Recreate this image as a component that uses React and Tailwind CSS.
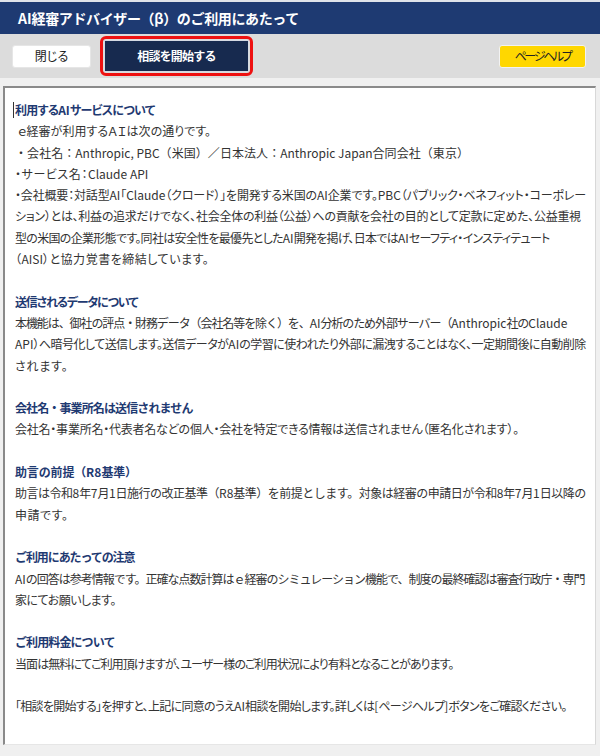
import React, { useLayoutEffect, useRef, useState, useEffect } from "react";

// Fits a single line of text to the width it has in the reference by
// computing letter-spacing (for the CJK characters only) while the page runs.
// Lines that would need heavy squeezing switch to proportional kana (palt).
function Fit({ w, children, className = "" }) {
  const ref = useRef(null);
  const [ls, setLs] = useState(0);
  const [palt, setPalt] = useState(false);
  const text = String(children);
  const parts = text.split(/([\x20-\x7E]+)/).filter((p) => p.length);
  const cjkCount = parts
    .filter((p) => !/^[\x20-\x7E]+$/.test(p))
    .reduce((a, p) => a + [...p].length, 0);
  const measure = () => {
    const el = ref.current;
    if (!el) return;
    const cur = parseFloat(getComputedStyle(el).letterSpacing) || 0;
    const nat = el.getBoundingClientRect().width - cur * cjkCount;
    const v = cjkCount > 1 ? (w - nat) / (cjkCount - 0.5) : 0;
    if (v < -1.1 && !palt) {
      setPalt(true);
      return;
    }
    setLs(Math.round(v * 1000) / 1000);
  };
  useLayoutEffect(measure, [w, palt]);
  useEffect(() => {
    if (document.fonts && document.fonts.ready) document.fonts.ready.then(measure);
  }, [palt]);
  return (
    <span
      ref={ref}
      className={
        "inline-block whitespace-nowrap " +
        (palt ? "[font-feature-settings:'palt'] " : "") +
        className
      }
      style={{ letterSpacing: ls + "px" }}
    >
      {parts.map((p, i) =>
        /^[\x20-\x7E]+$/.test(p) ? (
          <span key={i} className="tracking-normal">
            {p}
          </span>
        ) : (
          <React.Fragment key={i}>{p}</React.Fragment>
        )
      )}
    </span>
  );
}

const H = ({ w, children }) => (
  <div className="font-bold text-[#1f3a72]">
    <Fit w={w}>{children}</Fit>
  </div>
);
const L = ({ w, children, className = "" }) => (
  <div className={className}>
    <Fit w={w}>{children}</Fit>
  </div>
);
const B = () => <div className="h-[21.3px]" />;

export default function App() {
  return (
    <div className="w-[600px] h-[756px] bg-[#f0f0f0] flex flex-col font-['Noto_Sans_CJK_JP','Noto_Sans',sans-serif]">
      <div className="h-[34px] bg-[#1e3a72] border-t-2 border-[#dfe3ea] flex items-center pl-[18px]">
        <span className="text-white font-bold text-[14px]">
          <Fit w={281}>AI経審アドバイザー（β）のご利用にあたって</Fit>
        </span>
      </div>
      <div className="h-[44px] bg-[#dcdcdc] flex items-center pl-[12px] pr-[14px]">
        <button className="w-[79px] h-[23px] bg-white rounded-[3px] border border-[#e6e6e6] text-[12px] text-[#222] flex items-center justify-center">
          <Fit w={34}>閉じる</Fit>
        </button>
        <div className="ml-[9px] w-[153px] h-[40px] border-[3px] border-[#ee1111] rounded-[6px] p-[1px] flex">
          <button className="flex-1 bg-[#172a4f] border border-[#d5dae3] text-white font-bold text-[12px] flex items-center justify-center">
            <Fit w={79}>相談を開始する</Fit>
          </button>
        </div>
        <button className="ml-auto w-[87px] h-[23px] bg-[#ffd700] rounded-[3px] border border-[#f2f2f2] text-[12px] text-[#222] flex items-center justify-center">
          <Fit w={57}>ページヘルプ</Fit>
        </button>
      </div>
      <div className="flex-1 flex flex-col pt-[8px] pl-[3px] pr-[4px] pb-[11px]">
        <div className="flex-1 bg-white border-t-2 border-l-2 border-[#8a8a8a] border-r border-b border-r-[#d8d8d8] border-b-[#e6e6e6] pl-[10px] pt-[11px] text-[12px] leading-[21.3px] text-[#333] whitespace-nowrap overflow-hidden">
          <div className="font-bold text-[#1f3a72] flex items-center">
            <span className="inline-block w-px h-[16px] bg-[#333] -ml-[2px] mr-[1px]" />
            <Fit w={140}>利用するAIサービスについて</Fit>
          </div>
          <L w={193} className="pl-[3px]">ｅ経審が利用するＡＩは次の通りです。</L>
          <L w={454}>・会社名：Anthropic, PBC（米国）／日本法人：Anthropic Japan合同会社（東京）</L>
          <L w={133}>・サービス名：Claude API</L>
          <L w={571}>・会社概要：対話型AI「Claude（クロード）」を開発する米国のAI企業です。PBC（パブリック・ベネフィット・コーポレー</L>
          <L w={566}>ション）とは、利益の追求だけでなく、社会全体の利益（公益）への貢献を会社の目的として定款に定めた、公益重視</L>
          <L w={535}>型の米国の企業形態です。同社は安全性を最優先としたAI開発を掲げ、日本ではAIセーフティ・インスティテュート</L>
          <L w={194}>（AISI）と協力覚書を締結しています。</L>
          <B />
          <H w={123}>送信されるデータについて</H>
          <L w={553}>本機能は、御社の評点・財務データ（会社名等を除く）を、AI分析のため外部サーバー（Anthropic社のClaude</L>
          <L w={571}>API）へ暗号化して送信します。送信データがAIの学習に使われたり外部に漏洩することはなく、一定期間後に自動削除</L>
          <L w={53}>されます。</L>
          <B />
          <H w={178}>会社名・事業所名は送信されません</H>
          <L w={504}>会社名・事業所名・代表者名などの個人・会社を特定できる情報は送信されません（匿名化されます）。</L>
          <B />
          <H w={122}>助言の前提（R8基準）</H>
          <L w={571}>助言は令和8年7月1日施行の改正基準（R8基準）を前提とします。対象は経審の申請日が令和8年7月1日以降の</L>
          <L w={53}>申請です。</L>
          <B />
          <H w={120}>ご利用にあたっての注意</H>
          <L w={570}>AIの回答は参考情報です。正確な点数計算はｅ経審のシミュレーション機能で、制度の最終確認は審査行政庁・専門</L>
          <L w={101}>家にてお願いします。</L>
          <B />
          <H w={100}>ご利用料金について</H>
          <L w={439}>当面は無料にてご利用頂けますが、ユーザー様のご利用状況により有料となることがあります。</L>
          <B />
          <L w={552}>「相談を開始する」を押すと、上記に同意のうえAI相談を開始します。詳しくは[ページヘルプ]ボタンをご確認ください。</L>
        </div>
      </div>
    </div>
  );
}
